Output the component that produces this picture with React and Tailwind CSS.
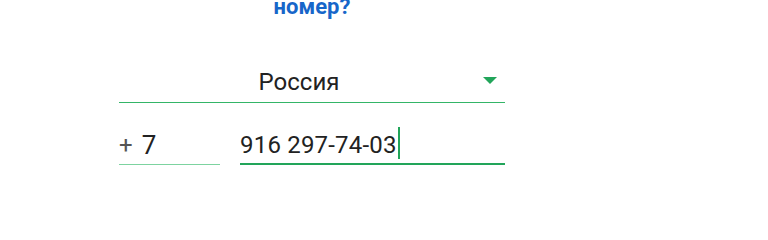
export default function App() {
  return (
    <div className="w-[768px] h-[209px] bg-white overflow-hidden font-['Roboto',sans-serif]">
      {/* tail of the heading above */}
      <div className="-mt-[5px] ml-[119px] w-[386px] text-center text-[22px] leading-[24px] font-bold text-[#1766c9]">
        номер?
      </div>

      <div className="ml-[119px] w-[386px] mt-[49px]">
        {/* country select */}
        <div className="flex items-start border-b border-[#34b567] pb-[6px]">
          <div className="flex-1 text-center text-[24px] leading-[28px] text-[#222]">
            Россия
          </div>
          <div className="w-[26px] pt-[9px] pr-[8px] flex justify-end">
            <svg width="14" height="7" viewBox="0 0 14 7">
              <path d="M0 0h14L7 7z" fill="#22a55a" />
            </svg>
          </div>
        </div>

        {/* phone row */}
        <div className="flex items-start gap-[20px] mt-[28px]">
          <div className="w-[101px] h-[34px] border-b border-[#7dd3a0] flex items-start leading-[28px] text-[#222]">
            <span className="text-[24px] text-[#555]">+</span>
            <span className="text-[26px] ml-[9px]">7</span>
          </div>
          <div className="flex-1 h-[34px] border-b-2 border-[#22a55a] text-[24px] leading-[28px] text-[#222] flex items-start">
            <span className="tracking-[0.2px]">916 297-74-03</span>
            <span className="inline-block w-[2px] h-[32px] bg-[#22a55a] ml-[1px] -mt-[4px]" />
          </div>
        </div>
      </div>
    </div>
  );
}
